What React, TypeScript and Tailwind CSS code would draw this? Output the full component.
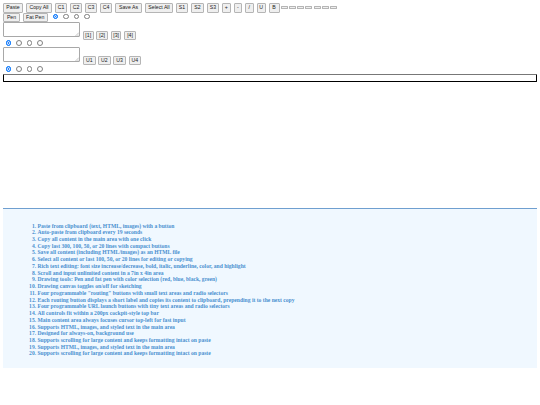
const top: [string, number][] = [["Paste",20],["Copy All",26],["C1",12],["C2",12],["C3",12],["C4",12],["Save As",27],["Select All",28],["S1",12],["S2",13],["S3",12],["+",8.5],["-",8.5],["/",8.5],["U",9],["B",11]];
const items = [
"Paste from clipboard (text, HTML, images) with a button",
"Auto-paste from clipboard every 19 seconds",
"Copy all content in the main area with one click",
"Copy last 300, 100, 50, or 20 lines with compact buttons",
"Save all content (including HTML/images) as an HTML file",
"Select all content or last 100, 50, or 20 lines for editing or copying",
"Rich text editing: font size increase/decrease, bold, italic, underline, color, and highlight",
"Scroll and input unlimited content in a 7in x 4in area",
"Drawing tools: Pen and fat pen with color selection (red, blue, black, green)",
"Drawing canvas toggles on/off for sketching",
"Four programmable \"routing\" buttons with small text areas and radio selectors",
"Each routing button displays a short label and copies its content to clipboard, prepending it to the next copy",
"Four programmable URL launch buttons with tiny text areas and radio selectors",
"All controls fit within a 200px cockpit-style top bar",
"Main content area always focuses cursor top-left for fast input",
"Supports HTML, images, and styled text in the main area",
"Designed for always-on, background use",
"Supports scrolling for large content and keeps formatting intact on paste",
"Supports HTML, images, and styled text in the main area",
"Supports scrolling for large content and keeps formatting intact on paste",
];
function Btn({ label, w }: { label: string; w: number }) {
  return <button className="h-[9.5px] shrink-0 rounded-[1px] border-[0.7px] border-[#b5b5b5] bg-[#efefef] p-0 text-[5.2px] leading-none text-[#222222]" style={{ width: w }}>{label}</button>;
}
function Radios() {
  return (
    <span className="flex items-center gap-[5px]">
      {[0,1,2,3].map(i => (
        <span key={i} className={i === 0 ? "h-[5.5px] w-[5.5px] rounded-full border-[0.7px] border-[#0075ff] bg-[#2f80f0] ring-[0.7px] ring-inset ring-white" : "h-[5.5px] w-[5.5px] rounded-full border-[0.6px] border-[#808080] bg-white"} />
      ))}
    </span>
  );
}
function Box() {
  return (
    <div className="relative h-[15px] w-[77px] shrink-0 rounded-[1px] border-[0.7px] border-[#a8a8a8] bg-white">
      <svg className="absolute bottom-0 right-0 h-[4px] w-[4px]" viewBox="0 0 4 4"><path d="M4 0.5 0.5 4M4 2.5 2.5 4" stroke="#888888" strokeWidth="0.5" /></svg>
    </div>
  );
}
export default function App() {
  return (
    <div className="h-[405px] w-[540px] overflow-hidden bg-white font-['Liberation_Sans',sans-serif]">
      <div className="px-[3px] pt-[3px]">
        <div className="flex items-center gap-[3px]">
          {top.map(([t, w]) => <Btn key={t} label={t} w={w} />)}
          <div className="-ml-[2px] flex gap-[1.3px]">
            {[0,1,2,3,4,5,6].map(i => <span key={i} className="h-[3px] w-[7px] rounded-[0.5px] border-[0.7px] border-[#b5b5b5] bg-[#efefef]" />)}
          </div>
        </div>
        <div className="flex h-[9.5px] items-center gap-[2.7px]">
          <Btn label="Pen" w={17} />
          <Btn label="Fat Pen" w={25} />
          <span className="ml-[2.5px] -translate-y-[1px]"><Radios /></span>
        </div>
        <div className="flex items-end gap-[3px]">
          <Box />
          <div className="-mb-[3px] flex gap-[2.7px]">{[["[1]",10.5],["[2]",12],["[3]",10.5],["[4]",12]].map(([t, w]) => <Btn key={t as string} label={t as string} w={w as number} />)}</div>
        </div>
        <div className="flex h-[10px] items-center pl-[2.5px] pt-[2px]"><Radios /></div>
        <div className="flex items-end gap-[3px]">
          <Box />
          <div className="-mb-[3px] flex gap-[2.7px]">{["U1","U2","U3","U4"].map(t => <Btn key={t} label={t} w={12.5} />)}</div>
        </div>
        <div className="flex h-[11.5px] items-center pl-[2.5px] pt-[2px]"><Radios /></div>
        <div className="h-[8.5px] w-[534px] rounded-[1px] border border-black border-t-[#777777] bg-white" />
      </div>
      <div className="mx-[3px] mt-[126px] h-[160px] border-t border-t-[#6f9fd0] bg-[#f0f8ff] pl-[30.5px] pt-[13.5px]">
        <ol className="m-0 list-decimal pl-[4px] text-[5.6px] font-bold leading-[6.74px] text-[#4a90d0] font-['Liberation_Serif',serif]">
          {items.map((t, i) => <li key={i} className="whitespace-nowrap">{t}</li>)}
        </ol>
      </div>
    </div>
  );
}
